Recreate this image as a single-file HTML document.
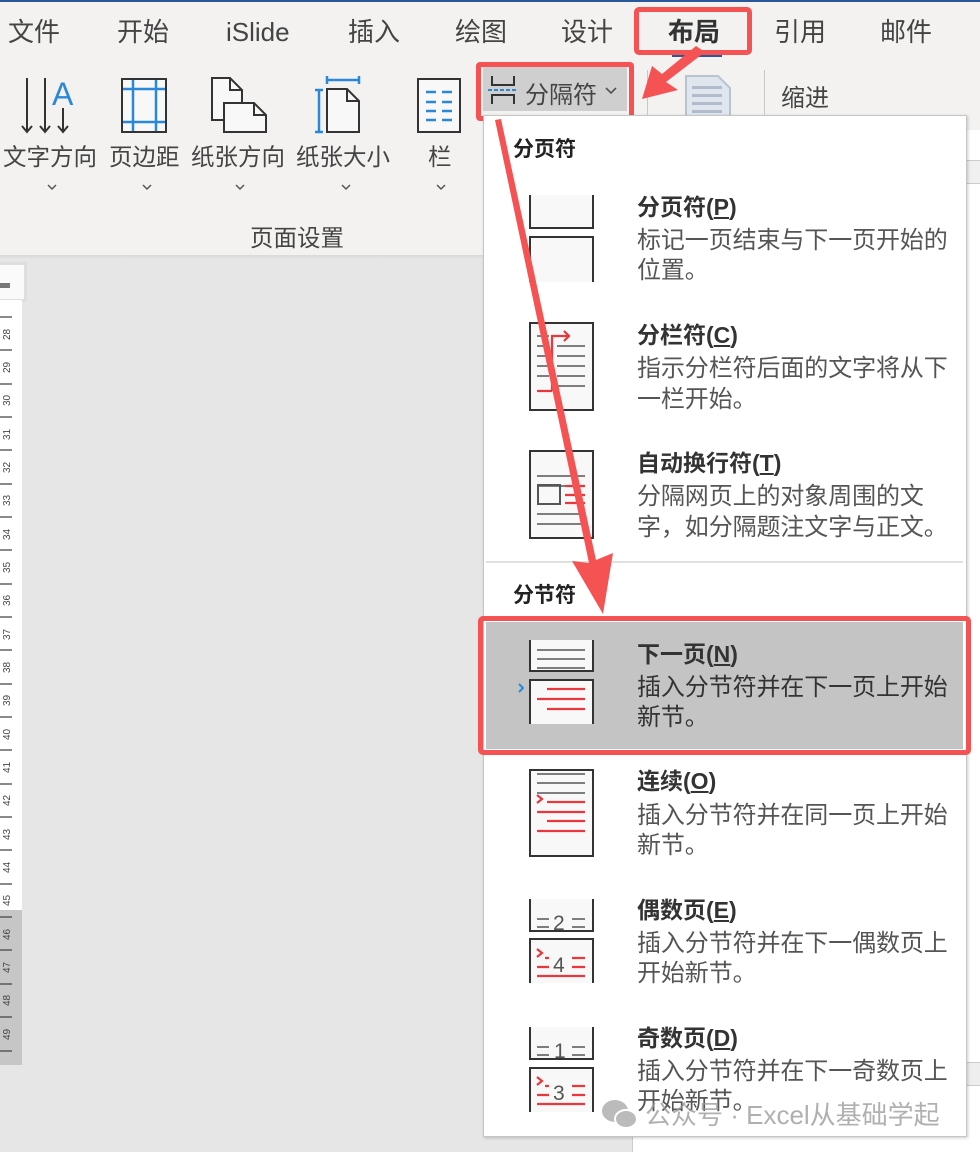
<!DOCTYPE html>
<html><head><meta charset="utf-8"><style>
*{margin:0;padding:0;box-sizing:border-box}
body{width:980px;height:1152px;overflow:hidden;position:relative;background:#e6e6e6;font-family:"Liberation Sans","Noto Sans CJK SC",sans-serif;color:#444}
.a{position:absolute;white-space:nowrap}
.tab{top:13px;font-size:26px;color:#444;line-height:38px}
.lbl{font-size:23.5px;color:#444;line-height:30px}
.t{left:637px;font-size:23px;font-weight:bold;color:#333;line-height:28px}
.d{left:637px;font-size:24px;color:#555;line-height:30px;letter-spacing:-0.1px}
.h{left:513px;font-size:21px;font-weight:bold;color:#222}
u{text-decoration:underline}
</style></head><body>
<div class="a" style="left:0;top:0;width:980px;height:258px;background:#f3f2f1"></div>
<div class="a" style="left:0;top:0;width:980px;height:2px;background:#2b579a"></div>
<div class="a" style="left:0;top:255px;width:980px;height:4px;background:linear-gradient(#d8d8d8,#e6e6e6)"></div>
<div class="a tab" style="left:8px">文件</div>
<div class="a tab" style="left:117px">开始</div>
<div class="a tab" style="left:226px">iSlide</div>
<div class="a tab" style="left:348px">插入</div>
<div class="a tab" style="left:455px">绘图</div>
<div class="a tab" style="left:561px">设计</div>
<div class="a tab" style="left:668px;font-weight:bold;color:#333">布局</div>
<div class="a tab" style="left:774px">引用</div>
<div class="a tab" style="left:880px">邮件</div>
<div class="a" style="left:672px;top:54px;width:50px;height:3px;background:#2b579a"></div>
<div class="a" style="left:634px;top:7px;width:118px;height:48px;border:5px solid #f55353;border-radius:5px"></div>

<svg class="a" style="left:0;top:60px" width="480" height="80">
<g stroke="#333" stroke-width="2" fill="none">
<path d="M27 18V72M22 66l5 6 5-6M45 18V72M40 66l5 6 5-6M63 48V72M58 66l5 6 5-6"/>
<rect x="122" y="19" width="44" height="53" fill="#f8f8f8"/>
<path d="M212 18h18l12 12v30h-30z" fill="#f8f8f8"/>
<path d="M224 43h30l12 12v17h-42z" fill="#f8f8f8"/>
<path d="M254 43v12h12"/>
<path d="M230 18v12h12"/>
<path d="M327 29h20l12 12v31h-32z" fill="#f8f8f8"/>
<path d="M347 29v12h12"/>
<rect x="418" y="19" width="42" height="53" fill="#f8f8f8"/>
</g>
<text x="52" y="45" font-size="32" fill="#2b88d8" font-family="Liberation Sans">A</text>
<g stroke="#2b88d8" stroke-width="2.5" fill="none">
<path d="M123 29h42M123 62h42M133 20v51M156 20v51"/>
<path d="M327 20h32M327 16v8M359 16v8M319 30v42M315 30h8M315 72h8"/>
<path d="M426 32h10M442 32h10M426 42h10M442 42h10M426 51h10M442 51h10M426 60h10M442 60h10"/>
</g>
</svg>
<div class="a lbl" style="left:3px;top:142px">文字方向</div>
<div class="a lbl" style="left:109px;top:142px">页边距</div>
<div class="a lbl" style="left:191px;top:142px">纸张方向</div>
<div class="a lbl" style="left:296px;top:142px">纸张大小</div>
<div class="a lbl" style="left:428px;top:142px">栏</div>
<svg class="a" style="left:0;top:180px" width="480" height="16"><g stroke="#555" stroke-width="1.5" fill="none"><path d="M48 5l4 4 4-4M143 5l4 4 4-4M236 5l4 4 4-4M342 5l4 4 4-4M437 5l4 4 4-4"/></g></svg>
<div class="a lbl" style="left:250px;top:223px">页面设置</div>

<div class="a" style="left:483px;top:67px;width:144px;height:44px;background:#cfcfcf"></div>
<svg class="a" style="left:486px;top:72px" width="34" height="34"><g fill="none" stroke-width="2"><path d="M6 4v9h22V4M6 32v-9h22v9" stroke="#333"/><path d="M2 18h30" stroke="#2b88d8" stroke-dasharray="4 2"/></g></svg>
<div class="a" style="left:525px;top:75px;font-size:24px;color:#444">分隔符</div>
<svg class="a" style="left:604px;top:86px" width="14" height="10"><path d="M2 2l5 5 5-5" stroke="#555" stroke-width="1.6" fill="none"/></svg>
<div class="a" style="left:476px;top:62px;width:158px;height:59px;border:5px solid #f55353;border-radius:4px"></div>
<div class="a" style="left:647px;top:70px;width:1px;height:45px;background:#c8c8c8"></div>
<div class="a" style="left:764px;top:70px;width:1px;height:45px;background:#c8c8c8"></div>
<svg class="a" style="left:684px;top:74px" width="50" height="42"><path d="M2 2h32l12 12v28H2z" fill="#dfe6ee" stroke="#b8c4d0" stroke-width="2"/><g fill="#b0bccb"><rect x="8" y="12" width="30" height="3"/><rect x="8" y="20" width="30" height="3"/><rect x="8" y="28" width="30" height="3"/><rect x="8" y="36" width="30" height="3"/></g></svg>
<div class="a" style="left:781px;top:78px;font-size:24px;color:#444">缩进</div>

<div class="a" style="left:0;top:262px;width:27px;height:40px;background:#fafafa;border:3px solid #dedede;border-left:none"></div>
<div class="a" style="left:0;top:283px;width:10px;height:5px;background:#777"></div>
<div class="a" style="left:0;top:300px;width:22px;height:610px;background:#fff"></div>
<div class="a" style="left:0;top:910px;width:22px;height:155px;background:#c6c6c6"></div>
<svg class="a" style="left:0;top:300px" width="22" height="765">
<g stroke="#444" stroke-width="1.2">
<path d="M0 17h12M0 50h12M0 84h12M0 117h12M0 150h12M0 184h12M0 217h12M0 250h12M0 284h12M0 317h12M0 350h12M0 384h12M0 417h12M0 450h12M0 484h12M0 517h12M0 550h12M0 584h12M0 617h12M0 650h12M0 684h12M0 717h12M0 751h12"/>
</g>
<g font-size="10" fill="#444" font-family="Liberation Sans">
<text transform="translate(10,40) rotate(-90)">28</text><text transform="translate(10,73) rotate(-90)">29</text><text transform="translate(10,106) rotate(-90)">30</text><text transform="translate(10,140) rotate(-90)">31</text><text transform="translate(10,173) rotate(-90)">32</text><text transform="translate(10,206) rotate(-90)">33</text><text transform="translate(10,240) rotate(-90)">34</text><text transform="translate(10,273) rotate(-90)">35</text><text transform="translate(10,306) rotate(-90)">36</text><text transform="translate(10,340) rotate(-90)">37</text><text transform="translate(10,373) rotate(-90)">38</text><text transform="translate(10,406) rotate(-90)">39</text><text transform="translate(10,440) rotate(-90)">40</text><text transform="translate(10,473) rotate(-90)">41</text><text transform="translate(10,506) rotate(-90)">42</text><text transform="translate(10,540) rotate(-90)">43</text><text transform="translate(10,573) rotate(-90)">44</text><text transform="translate(10,606) rotate(-90)">45</text><text transform="translate(10,640) rotate(-90)">46</text><text transform="translate(10,673) rotate(-90)">47</text><text transform="translate(10,706) rotate(-90)">48</text><text transform="translate(10,740) rotate(-90)">49</text>
</g></svg>

<div class="a" style="left:966px;top:130px;width:14px;height:1010px;background:#fff"></div>
<div class="a" style="left:966px;top:160px;width:14px;height:24px;background:#f0f0f0;border-top:1px solid #ccc;border-bottom:1px solid #ccc"></div>
<div class="a" style="left:966px;top:1062px;width:14px;height:24px;background:#eee;border-top:1px solid #ccc;border-bottom:1px solid #ccc"></div>
<div class="a" style="left:632px;top:1136px;width:348px;height:16px;background:#fff;border-left:1px solid #ccc"></div>

<div class="a" style="left:483px;top:115px;width:484px;height:1022px;background:#fff;border:1px solid #c6c6c6;box-shadow:1px 1px 3px rgba(0,0,0,.2)"></div>
<div class="a h" style="top:133px">分页符</div>
<div class="a" style="left:486px;top:561px;width:477px;height:2px;background:#e1e1e1"></div>
<div class="a h" style="top:579px">分节符</div>
<div class="a" style="left:486px;top:622px;width:477px;height:127px;background:#c4c4c4"></div>
<div class="a" style="left:478px;top:616px;width:493px;height:139px;border:5px solid #f55353;border-radius:5px"></div>

<svg class="a" style="left:510px;top:190px" width="100" height="940">
<g stroke="#333" stroke-width="2" fill="#f8f8f8">
<path d="M20 5v33h63V5"/><path d="M20 92V47h63v45"/>
<rect x="20" y="133" width="63" height="87"/>
<rect x="20" y="261" width="63" height="87"/>
<rect x="28" y="295" width="22" height="19" fill="none" stroke="#555"/>
<path d="M20 450v31h63v-31"/><path d="M20 534V490h63v44"/>
<rect x="20" y="580" width="63" height="86"/>
<path d="M20 709v32h63v-32"/><path d="M20 793V749h63v44"/>
<path d="M20 837v32h63v-32"/><path d="M20 922V878h63v44"/>
</g>
<g stroke="#555" stroke-width="1.6" fill="none">
<path d="M47 156h28M47 166h28M47 176h28M47 186h28M47 196h28"/>
<path d="M27 146h12M27 156h12M27 166h12M27 176h12M27 186h12"/>
<path d="M27 286h48M27 296h48M27 324h48M27 334h48"/>
<path d="M27 460h48M27 469h48M27 478h48"/>
<path d="M27 584h48M27 593h48M27 603h48"/>
<path d="M27 729h12M62 729h13M27 737h12M62 737h13"/>
<path d="M27 857h12M62 857h13M27 865h12M62 865h13"/>
</g>
<g fill="#555" font-family="Liberation Sans" font-size="21"><text x="43" y="740">2</text><text x="44" y="868">1</text><text x="43" y="782">4</text><text x="43" y="910">3</text></g>
<g stroke="#e8383d" stroke-width="2.2" fill="none">
<path d="M27 201h15M42 201V146h16M54 141l5 5-5 5"/>
<path d="M55 296h20M55 305h20M55 313h20"/>
<path d="M37 499h38M27 509h48M37 519h38"/>
<path d="M37 612h38M27 622h48M37 631h38M27 641h48M27 605l5 4-5 4"/>
<path d="M27 759l5 4-5 4M35 768h4M62 768h13M27 777h12M62 777h13M27 786h48"/>
<path d="M27 887l5 4-5 4M35 896h4M62 896h13M27 905h12M62 905h13M27 914h48"/>
</g>
<path d="M9 494l4 4-4 4" stroke="#2b88d8" stroke-width="2" fill="none"/>
</svg>

<div class="a t" style="top:193px">分页符(<u>P</u>)</div>
<div class="a d" style="top:226px">标记一页结束与下一页开始的</div>
<div class="a d" style="top:256px">位置。</div>
<div class="a t" style="top:321px">分栏符(<u>C</u>)</div>
<div class="a d" style="top:354px">指示分栏符后面的文字将从下</div>
<div class="a d" style="top:385px">一栏开始。</div>
<div class="a t" style="top:449px">自动换行符(<u>T</u>)</div>
<div class="a d" style="top:482px">分隔网页上的对象周围的文</div>
<div class="a d" style="top:513px">字，如分隔题注文字与正文。</div>
<div class="a t" style="top:640px">下一页(<u>N</u>)</div>
<div class="a d" style="top:673px;color:#333">插入分节符并在下一页上开始</div>
<div class="a d" style="top:703px;color:#333">新节。</div>
<div class="a t" style="top:767px">连续(<u>O</u>)</div>
<div class="a d" style="top:801px">插入分节符并在同一页上开始</div>
<div class="a d" style="top:831px">新节。</div>
<div class="a t" style="top:896px">偶数页(<u>E</u>)</div>
<div class="a d" style="top:929px">插入分节符并在下一偶数页上</div>
<div class="a d" style="top:959px">开始新节。</div>
<div class="a t" style="top:1024px">奇数页(<u>D</u>)</div>
<div class="a d" style="top:1057px">插入分节符并在下一奇数页上</div>
<div class="a d" style="top:1087px">开始新节。</div>
<svg class="a" style="left:600px;top:1097px" width="40" height="34"><g fill="#bbb"><ellipse cx="15" cy="14" rx="13" ry="11"/><ellipse cx="26" cy="22" rx="11" ry="9" stroke="#fff" stroke-width="2"/></g></svg>
<div class="a" style="left:645px;top:1095px;font-size:26px;color:rgba(150,150,150,.75)">公众号 · Excel从基础学起</div>

<svg class="a" style="left:0;top:0" width="980" height="1152">
<g fill="#f55353">
<polygon points="696,46 705,52 666,82 678,90 642,99 652,66 662,74"/>
<polygon points="495,120 501,119 596,560 613,553 603,614 572,561 589,563"/>
</g>
</svg>
</body></html>
